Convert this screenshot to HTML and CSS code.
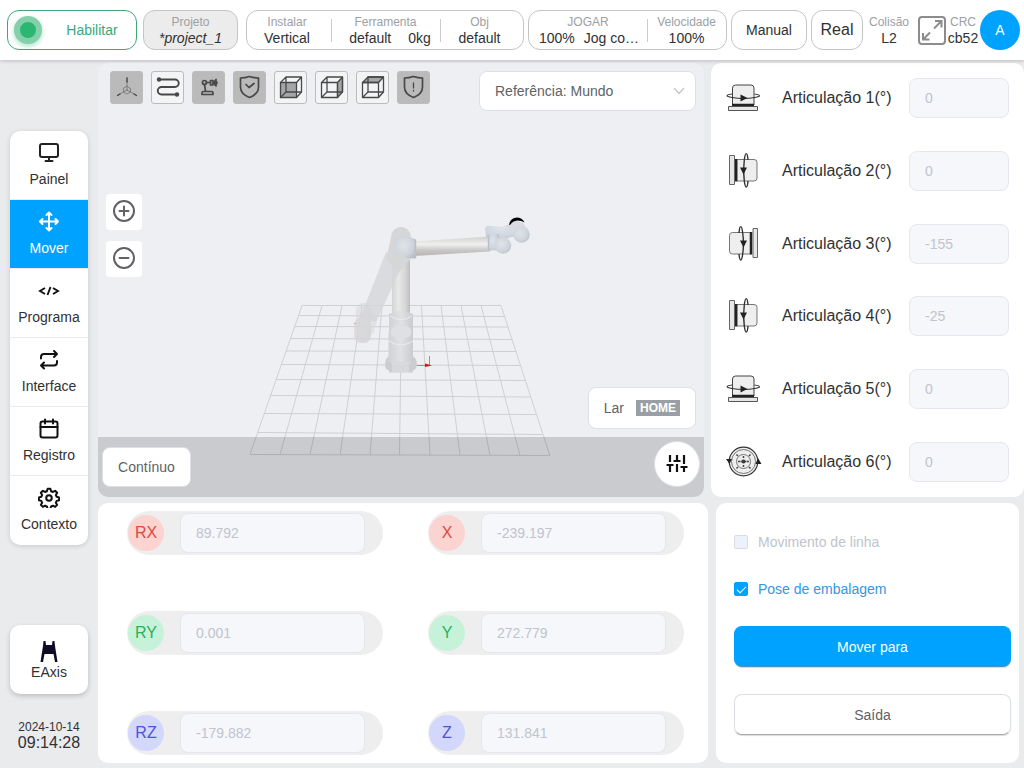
FILE: index.html
```html
<!DOCTYPE html>
<html lang="pt">
	<head>
		<meta charset="utf-8">
		<title>Mover - project_1</title>
		<link rel="stylesheet" href="styles.css">
	</head>
	<body>
		<!-- joint drawings, shared by the rows of the joint panel -->
		<svg class="defs" width="0" height="0">
			<symbol id="joint-up" viewBox="0 0 38 38">
				<path d="M7.500 26V9a3 3 0 0 1 3-3h15.500a3 3 0 0 1 3 3v17z" fill="#eee" stroke="#444"/>
				<path d="M7 15C1 15.800 0 17.300 7 18.500q11.500 2 23 0C36.500 17.300 35.500 15.800 29.500 15" fill="none" stroke="#333" stroke-width="1.200"/>
				<path d="M15.500 15.500v7l7-3.500z" fill="#222"/>
				<path d="M7 26h22" stroke="#222" stroke-width="2.500"/>
				<path d="M3.500 27.500h29v4h-29z" fill="#e6e6e6" stroke="#555"/>
			</symbol>
			<symbol id="joint-right" viewBox="0 0 38 38">
				<path d="M12 7.500h17a3 3 0 0 1 3 3V26a3 3 0 0 1-3 3H12z" fill="#eee" stroke="#777"/>
				<path d="M23 8C22.300 -.500 20.300 -.500 19.300 8q-1.500 10.500 0 21C20.300 37 22.300 37 23 29" fill="none" stroke="#333" stroke-width="1.400"/>
				<path d="M15 15.500h7l-3.500 7z" fill="#222"/>
				<path d="M11 7v22.500" stroke="#222" stroke-width="2.500"/>
				<path d="M4.500 3.500h5v29h-5z" fill="#e6e6e6" stroke="#666"/>
			</symbol>
			<symbol id="joint-left" viewBox="0 0 38 38">
				<path d="M25.500 7.500h-18a3 3 0 0 0-3 3V26a3 3 0 0 0 3 3h18z" fill="#eee" stroke="#777"/>
				<path d="M14 8C14.700 -.500 16.700 -.500 17.700 8q1.500 10.500 0 21C16.700 37 14.700 37 14 29" fill="none" stroke="#333" stroke-width="1.400"/>
				<path d="M15 15.500h7l-3.500 7z" fill="#222"/>
				<path d="M26 7v22.500" stroke="#222" stroke-width="2.500"/>
				<path d="M28 3.500h4.500v29H28z" fill="#e6e6e6" stroke="#666"/>
			</symbol>
			<symbol id="joint-flange" viewBox="0 0 38 38">
				<circle cx="18.500" cy="18.500" r="14.300" fill="#eee" stroke="#333" stroke-width="1.200"/>
				<circle cx="18.500" cy="18.500" r="12" fill="none" stroke="#777"/>
				<circle cx="18.500" cy="18.500" r="7" fill="none" stroke="#777"/>
				<circle cx="18.500" cy="18.500" r="2" fill="#333"/>
				<path d="M18.500 13v2m0 7v2M13 18.500h2m7 0h2M15.500 18.500h6" stroke="#444" stroke-width="1.500"/>
				<path d="M11.500 11.500l1.500 1.500M25.500 11.500L24 13M11.500 25.500L13 24M25.500 25.500L24 24" stroke="#444" stroke-width="1.500"/>
				<path d="M1 16h6l-2.500 5zM30.500 21h6L33 15z" fill="#222"/>
			</symbol>
		</svg>

		<header class="topbar">
			<button class="box enable"><span class="led"></span><span class="enable-text">Habilitar</span></button>
			<button class="box project"><span class="cap">Projeto</span><span class="val"><i>*project_1</i></span></button>
			<div class="box group">
				<div class="cell setup"><span class="cap">Instalar</span><span class="val">Vertical</span></div>
				<div class="cell tool"><span class="cap">Ferramenta</span><span class="val pair"><span>default</span><span>0kg</span></span></div>
				<div class="cell obj"><span class="cap">Obj</span><span class="val">default</span></div>
			</div>
			<div class="box group speed">
				<div class="cell jog"><span class="cap">JOGAR</span><span class="val pair"><span>100%</span><span>Jog co…</span></span></div>
				<div class="cell"><span class="cap">Velocidade</span><span class="val">100%</span></div>
			</div>
			<button class="box manual">Manual</button>
			<button class="box real">Real</button>
			<div class="cell collision"><span class="cap">Colisão</span><span class="val">L2</span></div>
			<div class="tail">
				<button class="icon-btn" aria-label="Tela cheia">
					<svg width="28" height="29" viewBox="0 0 28 29" fill="none" stroke="#8c8c8c" stroke-width="2">
						<rect x="1" y="1" width="26" height="27" rx="3"/>
						<path d="M17 5h6.500v6.500M23.500 5L16 12.500M11.500 23.500H5V17M5 23.500L12 16.500"/>
					</svg>
				</button>
				<div class="cell crc"><span class="cap">CRC</span><span class="val">cb52</span></div>
				<button class="avatar">A</button>
			</div>
		</header>

		<main class="layout">
			<aside class="side">
				<nav class="menu">
					<a href="#painel">
						<svg width="22" height="22" viewBox="0 0 22 22" fill="none" stroke="#222" stroke-width="2" stroke-linecap="round"><rect x="2" y="3" width="18" height="13" rx="2"/><path d="M11 16v3.500M7.500 20h7"/></svg>
						Painel
					</a>
					<a href="#mover" class="active">
						<svg width="22" height="22" viewBox="0 0 22 22" fill="none" stroke="#fff" stroke-width="2" stroke-linecap="round" stroke-linejoin="round"><path d="M11 3v17M2.500 11.500h17M8.500 5L11 2.500 13.500 5M8.500 18l2.500 2.500 2.500-2.500M4.500 9L2 11.500 4.500 14M17.500 9l2.500 2.500-2.500 2.500"/></svg>
						Mover
					</a>
					<a href="#programa">
						<svg width="22" height="22" viewBox="0 0 22 22" fill="none" stroke="#111" stroke-width="1.900"><path d="M7 9l-5 3 5 3M15 9l5 3-5 3M12.500 8l-3 8"/></svg>
						Programa
					</a>
					<a href="#interface">
						<svg width="22" height="22" viewBox="0 0 22 22" fill="none" stroke="#111" stroke-width="2" stroke-linecap="round" stroke-linejoin="round"><path d="M3 10.500V9a3 3 0 0 1 3-3h13M16 3l3 3-3 3M19 13v1.500a3 3 0 0 1-3 3H3M6 14.500l-3 3 3 3"/></svg>
						Interface
					</a>
					<a href="#registro">
						<svg width="22" height="22" viewBox="0 0 22 22" fill="none" stroke="#111" stroke-width="2" stroke-linecap="round"><rect x="2.500" y="4.500" width="17" height="16" rx="2"/><path d="M2.500 10h17M7 2.500v4M15 2.500v4"/></svg>
						Registro
					</a>
					<a href="#contexto">
						<svg width="22" height="22" viewBox="0 -1 24 24" fill="none" stroke="#111" stroke-width="2.200" stroke-linejoin="round"><circle cx="12" cy="12" r="3"/><path d="M10.500 2h3l.8 2.700 2 .8 2.400-1.300 2.200 2.200-1.400 2.400.9 2 2.600.7v3l-2.600.7-.9 2 1.400 2.400-2.200 2.200-2.400-1.300-2 .8-.8 2.700h-3l-.8-2.700-2-.8-2.400 1.300-2.200-2.200 1.400-2.400-.9-2L1 14.500v-3l2.600-.7.9-2-1.400-2.400 2.200-2.200 2.400 1.300 2-.8z"/></svg>
						Contexto
					</a>
				</nav>
				<button class="eaxis">
					<svg width="20" height="24" viewBox="0 0 20 24" fill="#0d0b26"><path d="M4.500 1h2l.5 4h6l.5-4h2l.5 5L18.500 22H16L14.500 14h-9L4 22H1.500L4 6z"/></svg>
					EAxis
				</button>
				<div class="clock"><div class="date">2024-10-14</div><div class="time">09:14:28</div></div>
			</aside>

			<div class="content">
				<div class="row upper">
					<section class="scene">
						<svg class="view3d" viewBox="98 63 606 434">
							<defs>
								<linearGradient id="tube" x1="0" x2="1" y1="0" y2="0"><stop offset="0" stop-color="#d3d4d5"/><stop offset=".35" stop-color="#e8e8e8"/><stop offset=".75" stop-color="#d5d5d5"/><stop offset="1" stop-color="#bdbdbd"/></linearGradient>
								<linearGradient id="arm" x1="0" x2="0" y1="0" y2="1"><stop offset="0" stop-color="#cfcfcd"/><stop offset=".4" stop-color="#f0f0ee"/><stop offset=".7" stop-color="#c9c8c6"/><stop offset="1" stop-color="#b5b5b4"/></linearGradient>
								<linearGradient id="base" x1="0" x2="1" y1="0" y2="0"><stop offset="0" stop-color="#d0d2d6"/><stop offset=".5" stop-color="#e0e1e4"/><stop offset="1" stop-color="#c9cbcf"/></linearGradient>
								<radialGradient id="ball" cx=".4" cy=".4" r=".75"><stop offset="0" stop-color="#dfe4ea"/><stop offset=".6" stop-color="#ced5dd"/><stop offset="1" stop-color="#b3bac3"/></radialGradient>
							</defs>
							<g fill="none" stroke="#cfd0d3">
								<path d="M302 305.500L250 454.500M322 305.500L280 454.500M342 305.500L310 454.500M362 305.500L340 455M382 305.500L370 455M401.500 305.500L399.500 455M421.500 305.500L430 455M441 305.500L460 455M461 305.500L490 455.500M481 305.500L520 455.500M501 305.500L550 456"/>
								<path d="M302 305.500H501M298.500 315.500L504.500 316.500M295 326.500L508 327M290.500 338.500L512 339.500M286 351L516 351.500M281.500 364.500L520.500 365.500M276 379.500L525.500 380.500M270.500 395.500L530.500 397M264.500 413.500L536.500 414.500M257.500 432.500L542.500 434.500M250 454.500L550 455.500"/>
							</g>
							<!-- base axes -->
							<path d="M417 365.500h12M429.500 365v-9" stroke="#f07070"/>
							<path d="M425 363.500v3.500l7-1.500z" fill="#e01010"/>
							<path d="M354 323.500h3" stroke="#e07070"/>
							<!-- upper arm column -->
							<path d="M392 240h18v76h-18z" fill="url(#tube)"/>
							<path d="M389 314q11.500-7 24 0v22h-24z" fill="url(#base)"/>
							<path d="M390 316q11 7 22 0" fill="none" stroke="#eaebed"/>
							<!-- shadow arm -->
							<g fill="#d5d6d8">
								<path d="M386 252l17 12-27 58-16-4z" opacity=".8"/>
								<rect x="356" y="303" width="15" height="40" rx="7" opacity=".5"/>
								<rect x="354" y="318" width="17" height="25" rx="7" opacity=".7"/>
								<path d="M370 307l7 13-3 12-8 8z" opacity=".5"/>
								<path d="M391 237a10 10 0 0 1 20 0v22l-12 13-13-12z"/>
							</g>
							<!-- foot -->
							<path d="M385 364q0-8 8-9h15q9 1 9 9 0 5-4 6.500v2h-24v-2q-4-1-4-6.500z" fill="#cbcdd1"/>
							<path d="M388.500 333q3-9 12.500-9t12 9v29h-24.500z" fill="url(#base)"/>
							<ellipse cx="401" cy="332" rx="10.500" ry="7" fill="#dfe0e3"/>
							<path d="M389 341q12 8 24 0" fill="none" stroke="#ebecee"/>
							<path d="M392 363h17v9h-17z" fill="#d6d8db"/>
							<path d="M391 363h20" stroke="#dfe0e2"/>
							<!-- forearm -->
							<path d="M414 241.500l76-5v15l-76 4.500z" fill="url(#arm)"/>
							<path d="M395 238l13-1.500 8 3v19l-9-.5q-9-5-12-14z" fill="url(#ball)"/>
							<path d="M415.500 240v18" stroke="#bac0c8" stroke-width="1.500"/>
							<!-- wrist -->
							<path d="M485 229q1-4 5-3l12 1 10-4q6-2 12 1l1 10-22 5-17-2z" fill="url(#ball)"/>
							<path d="M488 234h11v16l-11 .500z" fill="url(#ball)"/>
							<path d="M510 225q2-4 7-4 6 1 8 6l-5 9-9-2z" fill="#d8dce2"/>
							<path d="M509 225a8 7.500 0 0 1 15.500-2.500q-3-2-7-2-5 .500-7 4z" fill="#000"/>
							<circle cx="521.500" cy="234.500" r="8.300" fill="url(#ball)"/>
							<circle cx="503" cy="245.500" r="8.300" fill="url(#ball)"/>
							<path d="M488.500 235v15.500" stroke="#b9c2cc" stroke-width="1.500"/>
						</svg>

						<div class="toolbar">
							<div class="toggles">
								<button class="toggle on" aria-label="Eixos">
									<svg viewBox="1 1 31 31" stroke-width="1"><path d="M17 7v12M17 19l-9 5M17 19l9 5M17 15.500l3.500 2v3.500l-3.500 2-3.500-2v-3.500z" opacity=".5"/><path d="M17 7v4M7.500 24.500l2.500-1.500M26.500 24.500L24 23" stroke-width="1.300"/></svg>
								</button>
								<button class="toggle" aria-label="Trajetória">
									<svg viewBox="1 1 31 31" stroke-width="1.900"><path d="M8 8.500h16a3.700 3.700 0 0 1 0 7.500H10.500a3.700 3.700 0 0 0 0 7.500H26"/><g fill="#484848" stroke="none"><circle cx="8" cy="8.500" r="2.200"/><circle cx="26" cy="23.500" r="2.200"/></g></svg>
								</button>
								<button class="toggle on" aria-label="Robô">
									<svg viewBox="1 1 31 31" stroke-width="1.700"><path d="M10 23.500v-1.500q0-1.500 1.500-1.500h8q1.500 0 1.500 1.500v1.500zM13.500 20l-1-6.500M14.500 11.500h4"/><circle cx="12.500" cy="11.500" r="2"/><path d="M18.500 9.500v4.500h2.500V9.500zM24 8.500q-3 3.500 0 6.500M21 11.800h1.500M24 8.500v2.500h1M24 15v-2.500h1"/></svg>
								</button>
								<button class="toggle on" aria-label="Proteção">
									<svg viewBox="1 1 31 31" stroke-width="1.700"><path d="M16.500 5.500q4.500 1.500 9 1.500v9q0 7-9 10.500-9-3.500-9-10.500V7q4.500 0 9-1.500zM13 13.500l3 3 5-4"/></svg>
								</button>
								<button class="toggle" aria-label="Vista frontal">
									<svg viewBox="1 1 31 31" stroke-width="1.300"><path d="M6.500 11.500h16v15h-16z" fill="#a5a6a8"/><path d="M12 6h15.500v15H12zM6.500 11.500L12 6M22.500 11.500l5-5.500M6.500 26.500L12 21M22.500 26.500l5-5.500"/></svg>
								</button>
								<button class="toggle" aria-label="Vista lateral">
									<svg viewBox="1 1 31 31" stroke-width="1.300"><path d="M22.500 11.500l5-5.500v15l-5 5.500z" fill="#a5a6a8"/><path d="M6.500 11.500h16v15h-16zM12 6h15.500v15H12zM6.500 11.500L12 6M6.500 26.500L12 21"/></svg>
								</button>
								<button class="toggle" aria-label="Vista superior">
									<svg viewBox="1 1 31 31" stroke-width="1.300"><path d="M6.500 11.500L12 6h15.500l-5 5.500z" fill="#a5a6a8"/><path d="M6.500 11.500h16v15h-16zM12 6h15.500v15H12zM6.500 26.500L12 21M22.500 26.500l5-5.500"/></svg>
								</button>
								<button class="toggle on" aria-label="Alerta">
									<svg viewBox="1 1 31 31" stroke-width="1.700"><path d="M16.500 5.500q4.500 1.500 9 1.500v9q0 7-9 10.500-9-3.500-9-10.500V7q4.500 0 9-1.500z"/><path d="M16.500 12v5M16.500 19.500v.500" stroke-width="1.300"/></svg>
								</button>
							</div>
							<div class="select">
								<select aria-label="Referência"><option>Referência: Mundo</option><option>Referência: Base</option></select>
								<svg width="12" height="8" viewBox="0 0 12 8" fill="none" stroke="#c0c4cc" stroke-width="1.200"><path d="M1 1l5 5.500L11 1"/></svg>
							</div>
						</div>

						<div class="stage">
							<div class="zoom">
								<button aria-label="Aumentar"><svg viewBox="0 0 24 24"><circle cx="12" cy="12" r="10"/><path d="M7.500 12h9M12 7.500v9"/></svg></button>
								<button aria-label="Diminuir"><svg viewBox="0 0 24 24"><circle cx="12" cy="12" r="10"/><path d="M7.500 12h9"/></svg></button>
							</div>
							<button class="plain home">Lar <span class="tag">HOME</span></button>
						</div>

						<div class="bottombar">
							<button class="plain mode">Contínuo</button>
							<button class="round" aria-label="Ajustes">
								<svg width="22" height="20" viewBox="0 0 22 20" fill="none" stroke="#111" stroke-width="2.200"><path d="M4 1v7M.500 11h7M4 11v7M11 1v6M7.500 7h7M11 10v8M18 1v9M14.500 13h7M18 13v5"/></svg>
							</button>
						</div>
					</section>

					<section class="panel joints">
						<div class="joint"><svg><use href="#joint-up"/></svg><label for="j1">Articulação 1(°)</label><input id="j1" value="0" disabled></div>
						<div class="joint"><svg><use href="#joint-right"/></svg><label for="j2">Articulação 2(°)</label><input id="j2" value="0" disabled></div>
						<div class="joint"><svg><use href="#joint-left"/></svg><label for="j3">Articulação 3(°)</label><input id="j3" value="-155" disabled></div>
						<div class="joint"><svg><use href="#joint-right"/></svg><label for="j4">Articulação 4(°)</label><input id="j4" value="-25" disabled></div>
						<div class="joint"><svg><use href="#joint-up"/></svg><label for="j5">Articulação 5(°)</label><input id="j5" value="0" disabled></div>
						<div class="joint"><svg><use href="#joint-flange"/></svg><label for="j6">Articulação 6(°)</label><input id="j6" value="0" disabled></div>
					</section>
				</div>

				<div class="row lower">
					<section class="panel pose">
						<div class="axis red"><label for="rx">RX</label><input id="rx" value="89.792" disabled></div>
						<div class="axis red"><label for="x">X</label><input id="x" value="-239.197" disabled></div>
						<div class="axis green"><label for="ry">RY</label><input id="ry" value="0.001" disabled></div>
						<div class="axis green"><label for="y">Y</label><input id="y" value="272.779" disabled></div>
						<div class="axis blue"><label for="rz">RZ</label><input id="rz" value="-179.882" disabled></div>
						<div class="axis blue"><label for="z">Z</label><input id="z" value="131.841" disabled></div>
					</section>

					<section class="panel options">
						<label class="check off"><input type="checkbox" disabled>Movimento de linha</label>
						<label class="check"><input type="checkbox" checked>Pose de embalagem</label>
						<button class="action primary">Mover para</button>
						<button class="action">Saída</button>
					</section>
				</div>
			</div>
		</main>
	</body>
</html>
```

FILE: styles.css
```css
* {
	box-sizing: border-box;
}

body {
	margin: 0;
	min-height: 100vh;
	display: flex;
	flex-direction: column;
	background: #eaebed;
	color: #303133;
	font-family: "Liberation Sans", Arial, sans-serif;
	font-size: 14px;
}

button, input, select {
	font: inherit;
	color: inherit;
	margin: 0;
}

button {
	padding: 0;
	border: 0;
	background: none;
	cursor: pointer;
}

.defs {
	position: absolute;
}

/* top bar */
.topbar {
	position: relative;
	display: flex;
	align-items: center;
	gap: 4px;
	height: 60px;
	padding: 0 4px 0 7px;
	background: #fff;
	box-shadow: 0 1px 4px rgba(0, 0, 0, .2);
}

.box {
	height: 40px;
	border: 1px solid #c4c4c4;
	border-radius: 12px;
	background: #fff;
}

.enable {
	display: flex;
	align-items: center;
	width: 130px;
	margin-right: 2px;
	padding-left: 6px;
	border-color: #3fa57a;
	color: #3fa57a;
}

.led {
	width: 28px;
	height: 28px;
	border: 6px solid #83d0ab;
	border-radius: 50%;
	background: #2bb673;
	box-shadow: 0 2px 5px rgba(43, 182, 115, .4);
}

.enable-text {
	flex: 1;
	padding-left: 6px;
}

.project {
	width: 95px;
	margin-right: 4px;
	background: #ececec;
}

.cap, .val {
	display: block;
	text-align: center;
	white-space: nowrap;
}

.cap {
	color: #9da0a5;
	font-size: 12px;
	line-height: 15px;
}

.val {
	line-height: 16px;
}

.group {
	display: flex;
	align-items: center;
	width: 278px;
}

.speed {
	width: 199px;
}

.cell {
	flex: 1;
}

.group .cell + .cell {
	position: relative;
}

.group .cell + .cell::before {
	content: "";
	position: absolute;
	left: 0;
	top: 4px;
	bottom: 4px;
	border-left: 1px solid #ccc;
}

.group .setup {
	flex: 0 0 84px;
	padding-right: 4px;
}

.group .tool {
	flex: 0 0 109px;
}

.group .obj {
	padding-right: 4px;
}

.group .jog {
	flex: 0 0 118px;
}

.pair {
	display: flex;
	justify-content: center;
	gap: 17px;
	padding-left: 9px;
}

.jog .pair {
	gap: 9px;
	padding-left: 2px;
}

.manual {
	width: 76px;
}

.real {
	width: 52px;
	font-size: 16px;
}

.collision {
	flex: 0 0 44px;
}

.tail {
	display: flex;
	align-items: center;
	margin-left: auto;
}

.icon-btn svg {
	display: block;
}

.tail .crc {
	flex: 0 0 34px;
}

.avatar {
	width: 40px;
	height: 40px;
	border-radius: 50%;
	background: #00a2ff;
	color: #fff;
}

/* page frame */
.layout {
	flex: 1;
	display: flex;
}

.side {
	flex: 0 0 98px;
	padding: 71px 10px 0;
}

.menu {
	overflow: hidden;
	border-radius: 10px;
	background: #fff;
	box-shadow: 0 1px 5px rgba(0, 0, 0, .15);
}

.menu a {
	display: flex;
	flex-direction: column;
	align-items: center;
	gap: 8px;
	height: 69px;
	padding-top: 10px;
	border-bottom: 1px solid #ebebeb;
	color: inherit;
	line-height: 16px;
	text-decoration: none;
}

.menu a:last-child {
	border-bottom: 0;
}

.menu .active {
	background: #00a2ff;
	color: #fff;
}

.eaxis {
	display: flex;
	flex-direction: column;
	align-items: center;
	width: 78px;
	height: 69px;
	margin-top: 80px;
	padding-top: 15px;
	border-radius: 10px;
	background: #fff;
	box-shadow: 0 2px 5px rgba(0, 0, 0, .2);
	line-height: 16px;
}

.clock {
	margin-top: 26px;
	text-align: center;
}

.date {
	font-size: 12px;
	line-height: 15px;
}

.time {
	font-size: 16px;
	line-height: 16px;
}

.content {
	flex: 1;
	min-width: 0;
	display: flex;
	flex-direction: column;
	gap: 6px;
	padding: 3px 0 5px;
}

.row {
	display: grid;
}

.upper {
	flex: 1;
	grid-template-columns: minmax(0, 1fr) 313px;
	gap: 7px;
}

.lower {
	grid-template-columns: minmax(0, 1fr) 303px;
	gap: 8px;
	padding-right: 5px;
}

.panel {
	border-radius: 10px;
	background: #fff;
}

/* 3d scene */
.scene {
	position: relative;
	display: flex;
	flex-direction: column;
	overflow: hidden;
	border-radius: 10px;
	background: #eeeff3;
}

.view3d {
	position: absolute;
	width: 100%;
	height: 100%;
}

.toolbar, .stage, .bottombar {
	position: relative;
	display: flex;
	justify-content: space-between;
}

.toolbar {
	padding: 8px 8px 0 12px;
}

.toggles {
	display: flex;
	gap: 8px;
}

.toggle {
	width: 33px;
	height: 33px;
	border: 1px solid #bcbcbc;
	border-radius: 3px;
	background: #f3f4f6;
}

.toggle.on {
	background: #bababa;
}

.toggle svg {
	display: block;
	width: 31px;
	height: 31px;
	fill: none;
	stroke: #484848;
	stroke-linecap: round;
	stroke-linejoin: round;
}

.select {
	position: relative;
	width: 217px;
}

.select select {
	appearance: none;
	width: 100%;
	height: 40px;
	padding: 0 30px 0 15px;
	border: 1px solid #dcdfe6;
	border-radius: 8px;
	background: #fff;
	color: #606266;
}

.select svg {
	position: absolute;
	right: 11px;
	top: 16px;
	pointer-events: none;
}

.stage {
	flex: 1;
	padding: 83px 8px 8px;
}

.zoom {
	display: flex;
	flex-direction: column;
	gap: 11px;
}

.zoom button {
	width: 36px;
	height: 36px;
	padding-bottom: 2px;
	border-radius: 4px;
	background: #fff;
}

.zoom svg {
	display: block;
	width: 24px;
	height: 24px;
	margin: 0 auto;
	fill: none;
	stroke: #606266;
	stroke-width: 2;
	stroke-linecap: round;
}

.plain {
	border: 1px solid #dcdfe6;
	border-radius: 8px;
	background: #fff;
	color: #606266;
}

.home {
	align-self: flex-end;
	display: flex;
	align-items: center;
	gap: 12px;
	height: 42px;
	padding: 0 15px;
}

.tag {
	padding: 0 4px;
	background: #999fa4;
	color: #fff;
	font-size: 12px;
	font-weight: bold;
	line-height: 16px;
}

.bottombar {
	align-items: flex-start;
	height: 60px;
	padding: 4px;
	background: rgba(0, 0, 0, .15);
}

.mode {
	width: 89px;
	height: 40px;
	margin-top: 6px;
}

.round {
	display: flex;
	align-items: center;
	justify-content: center;
	width: 46px;
	height: 46px;
	border: 1px solid #dcdfe6;
	border-radius: 50%;
	background: #fff;
}

/* value fields */
.joint input, .axis input {
	height: 40px;
	padding: 0 15px;
	border: 1px solid #e4e7ed;
	border-radius: 8px;
	background: #f5f7fb;
	color: #c0c4cc;
}

.joints {
	display: flex;
	flex-direction: column;
	justify-content: space-between;
	padding: 15px 15px 15px 14px;
}

.joint {
	display: flex;
	align-items: center;
}

.joint svg {
	width: 38px;
	height: 38px;
	margin-right: 19px;
}

.joint label {
	flex: 1;
	font-size: 16px;
}

.joint input {
	width: 100px;
}

.pose {
	display: grid;
	grid-template-columns: repeat(2, minmax(0, 1fr));
	gap: 56px 45px;
	padding: 8px 24px 8px 29px;
}

.axis {
	display: flex;
	align-items: center;
	height: 44px;
	padding: 0 18px 0 1px;
	border-radius: 22px;
	background: #eee;
}

.axis label {
	flex: 0 0 36px;
	margin-right: 16px;
	border-radius: 50%;
	font-size: 16px;
	line-height: 36px;
	text-align: center;
}

.axis input {
	flex: 1;
	min-width: 0;
}

.red label {
	background: #fbd3d0;
	color: #dd4a3d;
}

.green label {
	background: #c6f2d9;
	color: #27b35d;
}

.blue label {
	background: #d3d7fb;
	color: #4a55d6;
}

.options {
	display: flex;
	flex-direction: column;
	padding: 29px 8px 28px 18px;
}

.check {
	display: flex;
	align-items: center;
	gap: 10px;
	height: 20px;
	margin-bottom: 27px;
	color: #3497e0;
}

.check.off {
	color: #c0c4cc;
}

.check input {
	appearance: none;
	display: grid;
	place-items: center;
	width: 14px;
	height: 14px;
	border: 1px solid #d8dce8;
	border-radius: 2px;
	background: #edf1fc;
}

.check input:checked {
	border-color: #00a2ff;
	background: #00a2ff;
}

.check input:checked::before {
	content: "";
	width: 4px;
	height: 8px;
	margin-bottom: 2px;
	border: solid #fff;
	border-width: 0 1px 1px 0;
	transform: rotate(45deg);
}

.action {
	height: 41px;
	margin-bottom: 27px;
	border: 1px solid #dcdfe6;
	border-bottom-color: #aaa;
	border-radius: 8px;
	color: #606266;
	box-shadow: 0 1px 1px rgba(0, 0, 0, .15);
}

.action:last-child {
	margin-bottom: 0;
}

.primary {
	border-color: #00a2ff #00a2ff #4a90bd;
	background: #00a2ff;
	color: #fff;
}
```
